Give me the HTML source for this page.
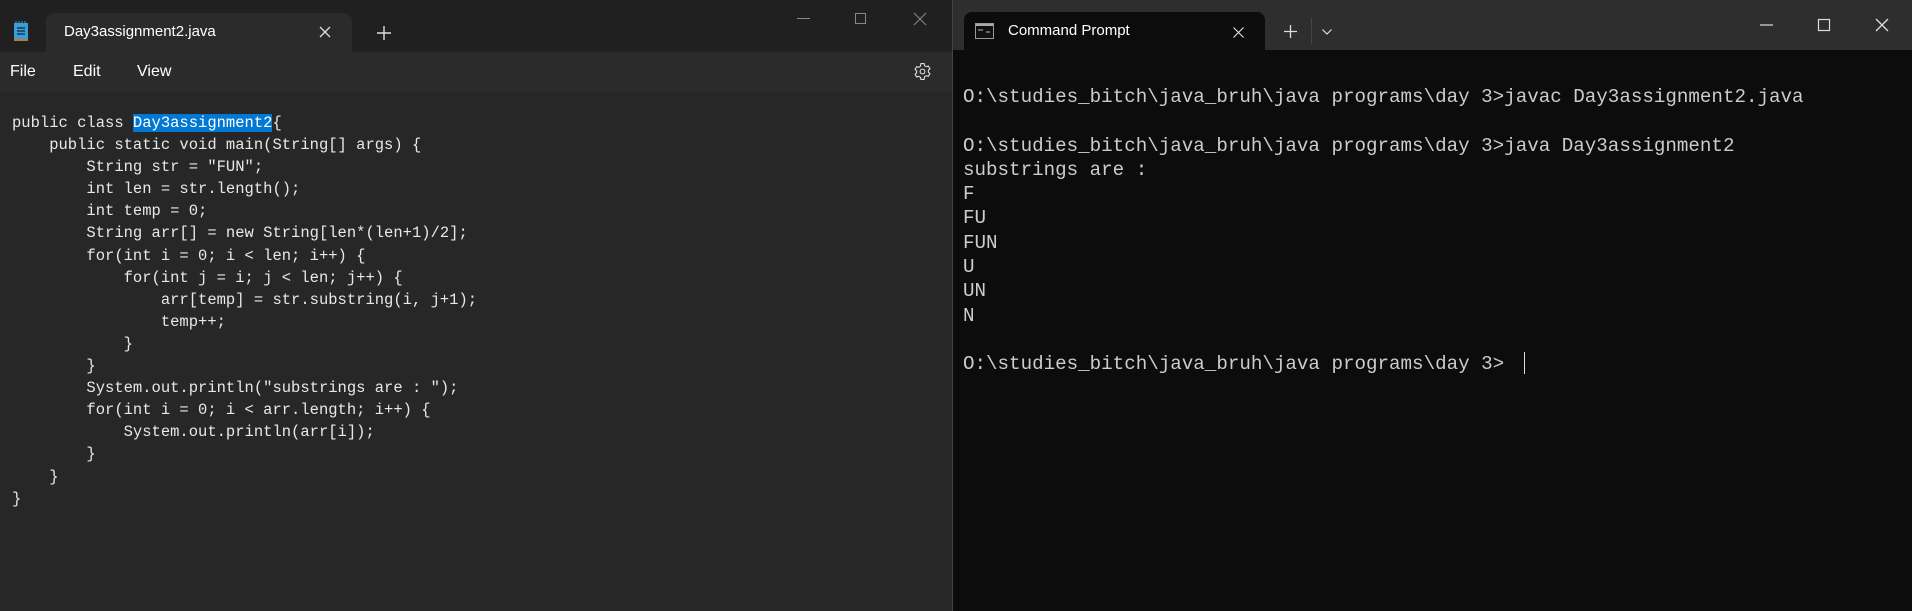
<!DOCTYPE html>
<html><head><meta charset="utf-8"><style>
*{margin:0;padding:0;box-sizing:border-box}
body{width:1912px;height:611px;overflow:hidden;background:#0c0c0c;font-family:"Liberation Sans",sans-serif;position:relative}
.abs{position:absolute}
#ed{left:0;top:0;width:952px;height:611px;background:#272727;border-top:1px solid #5a5a5a}
#edtabs{left:0;top:0;width:952px;height:52px;background:#202020}
#edtab{left:46px;top:13px;width:306px;height:39px;background:#2b2b2b;border-radius:8px 8px 0 0}
#menu{left:0;top:52px;width:952px;height:40px;background:#2b2b2b;color:#fff;font-size:16px}
pre{font-family:"Liberation Mono",monospace}
#code{left:12px;top:112px;font-size:15.5px;line-height:22.1px;color:#e8e8e8}
.sel{background:#0078d4;color:#fff}
#div{left:952px;top:0;width:1px;height:611px;background:#444}
#tm{left:953px;top:0;width:959px;height:611px;background:#0c0c0c;border-top:1px solid #555}
#tmtabs{left:953px;top:0;width:959px;height:50px;background:#2e2e2e}
#tmtab{left:964px;top:12px;width:301px;height:38px;background:#0c0c0c;border-radius:8px 8px 0 0}
#term{left:963px;top:85px;font-size:19.2px;line-height:24.3px;color:#cccccc}
</style></head><body>
<div id="ed" class="abs"></div>
<div id="edtabs" class="abs"></div>
<div id="edtab" class="abs"></div>
<svg class="abs" style="left:13px;top:20px" width="16" height="22" viewBox="0 0 16 22"><rect x="1" y="3" width="14" height="17" fill="#3d9bd6"/><rect x="1" y="19" width="14" height="2" fill="#b87a3a"/><path d="M4 8h8M4 11h8M4 14h8" stroke="#173a55" stroke-width="1.5"/><path d="M3 1v3M6 1v3M9 1v3M12 1v3" stroke="#3d9bd6" stroke-width="1"/></svg>
<div class="abs" style="left:64px;top:23px;color:#fff;font-size:15px">Day3assignment2.java</div>
<svg class="abs" style="left:319px;top:26px" width="12" height="12"><path d="M1 1L11 11M11 1L1 11" stroke="#ddd" stroke-width="1.3"/></svg>
<svg class="abs" style="left:377px;top:26px" width="14" height="14"><path d="M7 0V14M0 7H14" stroke="#ddd" stroke-width="1.4"/></svg>
<svg class="abs" style="left:797px;top:12px" width="140" height="14"><path d="M0 6.5H13" stroke="#888"/><rect x="58.5" y="1.5" width="10" height="10" fill="none" stroke="#888"/><path d="M117 1L129 13M129 1L117 13" stroke="#888"/></svg>
<div id="menu" class="abs"><span class="abs" style="left:10px;top:11px">File</span><span class="abs" style="left:73px;top:11px">Edit</span><span class="abs" style="left:137px;top:11px">View</span></div>
<svg class="abs" style="left:913px;top:62px" width="19" height="19" viewBox="0 0 24 24"><path d="M10 2h4l.6 2.6 2.2 1.3 2.6-.8 2 3.4-2 1.8v2.6l2 1.8-2 3.4-2.6-.8-2.2 1.3L14 22h-4l-.6-2.6-2.2-1.3-2.6.8-2-3.4 2-1.8v-2.6l-2-1.8 2-3.4 2.6.8 2.2-1.3z" fill="none" stroke="#ddd" stroke-width="1.4"/><circle cx="12" cy="12" r="3" fill="none" stroke="#ddd" stroke-width="1.4"/></svg>
<pre id="code" class="abs">public class <span class="sel">Day3assignment2</span>{
    public static void main(String[] args) {
        String str = "FUN";
        int len = str.length();
        int temp = 0;
        String arr[] = new String[len*(len+1)/2];
        for(int i = 0; i &lt; len; i++) {
            for(int j = i; j &lt; len; j++) {
                arr[temp] = str.substring(i, j+1);
                temp++;
            }
        }
        System.out.println("substrings are : ");
        for(int i = 0; i &lt; arr.length; i++) {
            System.out.println(arr[i]);
        }
    }
}</pre>
<div id="div" class="abs"></div>
<div id="tm" class="abs"></div>
<div id="tmtabs" class="abs"></div>
<div id="tmtab" class="abs"></div>
<svg class="abs" style="left:975px;top:23px" width="19" height="16"><rect x=".5" y=".5" width="18" height="15" fill="#111" stroke="#999"/><rect x="1" y="1" width="17" height="2" fill="#aaa"/><path d="M3 7h5M11 9h4" stroke="#bbb"/></svg>
<div class="abs" style="left:1008px;top:22px;color:#fff;font-size:15px">Command Prompt</div>
<svg class="abs" style="left:1233px;top:27px" width="11" height="11"><path d="M.5 .5L10.5 10.5M10.5 .5L.5 10.5" stroke="#ddd" stroke-width="1.2"/></svg>
<svg class="abs" style="left:1284px;top:25px" width="13" height="13"><path d="M6.5 0V13M0 6.5H13" stroke="#ddd" stroke-width="1.3"/></svg>
<div class="abs" style="left:1311px;top:18px;width:1px;height:26px;background:#444"></div>
<svg class="abs" style="left:1322px;top:29px" width="10" height="6"><path d="M.5 .5L5 5 9.5 .5" fill="none" stroke="#ddd" stroke-width="1.2"/></svg>
<svg class="abs" style="left:1759px;top:18px" width="130" height="14"><path d="M1 7H14" stroke="#ddd" stroke-width="1.2"/><rect x="59.5" y="1.5" width="11" height="11" fill="none" stroke="#ddd" stroke-width="1.2"/><path d="M117 1L129 13M129 1L117 13" stroke="#ddd" stroke-width="1.3"/></svg>
<pre id="term" class="abs">O:\studies_bitch\java_bruh\java programs\day 3>javac Day3assignment2.java

O:\studies_bitch\java_bruh\java programs\day 3>java Day3assignment2
substrings are :
F
FU
FUN
U
UN
N

O:\studies_bitch\java_bruh\java programs\day 3></pre>
<div class="abs" style="left:1524px;top:352px;width:1px;height:22px;background:#ddd"></div>
</body></html>
